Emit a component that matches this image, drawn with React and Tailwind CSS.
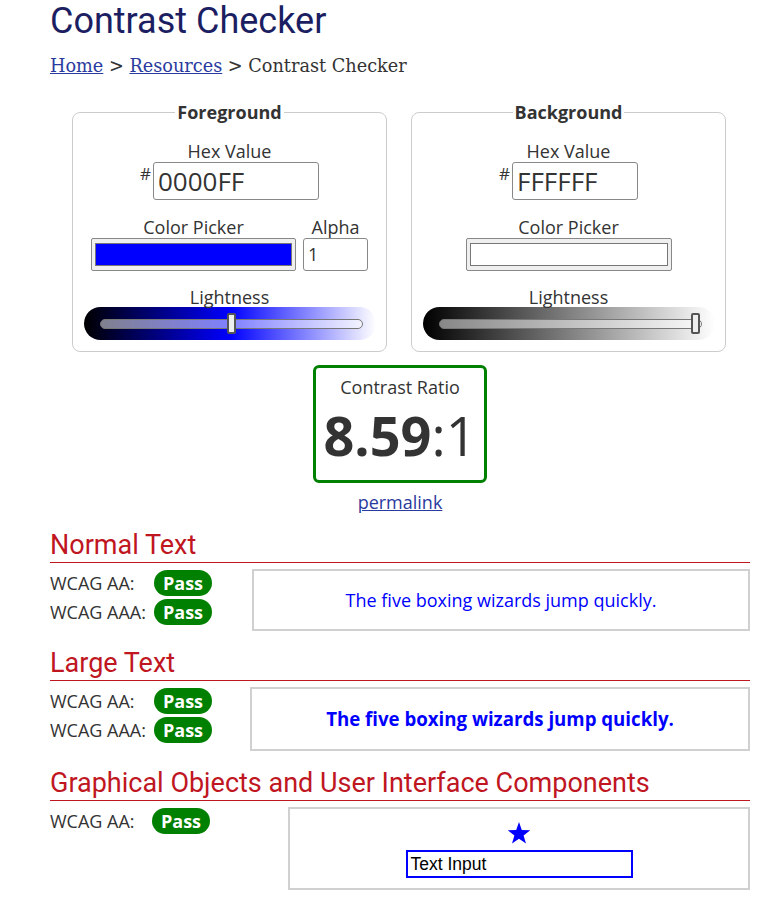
const RED = "text-[#c0161f]";

function Badge() {
  return (
    <span className="inline-flex h-[26px] items-center rounded-full bg-[#008000] px-[9px] text-[18px] font-bold leading-none text-white">
      Pass
    </span>
  );
}

function Slider({ gradient, pos }) {
  return (
    <div className="mx-auto mt-[-1px] flex h-[33px] w-[292px] items-center rounded-full pl-[16px] pr-[13px]" style={{ background: gradient }}>
      <div className="relative h-[10px] w-full rounded-full border border-[#777] bg-[rgba(255,255,255,0.5)]">
        <div
          className="absolute top-[-7px] h-[21px] w-[9px] rounded-[2px] border-2 border-[#555] bg-[#eee]"
          style={{ left: `calc(${pos}% - ${pos === 100 ? 10 : 4}px)` }}
        />
      </div>
    </div>
  );
}

function Swatch({ color, w }) {
  return (
    <div className={`flex h-[33px] ${w} rounded-[2px] border border-[#888] bg-[#efefef] px-[3px] py-[4px]`}>
      <div className="h-full w-full border border-[#777]" style={{ background: color }} />
    </div>
  );
}

function ColorFieldset({ legend, hex, hexW, color, gradient, pos, alpha }) {
  return (
    <fieldset className="w-[315px] rounded-[8px] border border-[#ccc] px-0 pb-[11px] pt-[16px]">
      <legend className="mx-auto px-[2px] text-[18px] font-bold leading-[24px] text-[#333]">{legend}</legend>
      <div className="text-center text-[18px] leading-[22px]">Hex Value</div>
      <div className="flex justify-center">
        <span className="mr-[2px] mt-[2px] text-[17px] leading-[20px]">#</span>
        <div className={`flex h-[38px] ${hexW} items-center rounded-[3px] border border-[#888] pl-[4px] text-[26px] text-[#333]`}>{hex}</div>
      </div>
      {alpha ? (
        <div className="mt-[16px] flex justify-center gap-[7px]">
          <div className="flex flex-col items-center">
            <div className="text-[18px] leading-[22px]">Color Picker</div>
            <Swatch color={color} w="w-[205px]" />
          </div>
          <div className="flex flex-col items-center">
            <div className="text-[18px] leading-[22px]">Alpha</div>
            <div className="flex h-[33px] w-[65px] items-center rounded-[3px] border border-[#888] pl-[4px] text-[18px]">1</div>
          </div>
        </div>
      ) : (
        <div className="mt-[16px] flex flex-col items-center">
          <div className="text-[18px] leading-[22px]">Color Picker</div>
          <Swatch color={color} w="w-[206px]" />
        </div>
      )}
      <div className="mt-[15px] text-center text-[18px] leading-[22px]">Lightness</div>
      <Slider gradient={gradient} pos={pos} />
    </fieldset>
  );
}

function Section({ title, leftW, labelW, rows, children, boxH }) {
  return (
    <div>
      <h2 className={`pb-[2px] font-['Roboto',sans-serif] text-[27px] leading-[30px] ${RED}`}>{title}</h2>
      <div className="h-[1px] bg-[#c0161f]" />
      <div className="mt-[6px] flex">
        <div className={`${leftW} shrink-0`}>
          {rows.map((r, i) => (
            <div key={r} className={`flex items-center ${i > 0 ? "mt-[3px]" : "mt-[1px]"}`}>
              <span className={`${labelW} text-[18px] leading-[26px] text-[#333]`}>{r}</span>
              <Badge />
            </div>
          ))}
        </div>
        <div className={`flex-1 border-2 border-[#d0d0d0] ${boxH}`}>{children}</div>
      </div>
    </div>
  );
}

export default function App() {
  return (
    <div className="min-h-[903px] w-[769px] bg-white font-['Open_Sans',sans-serif] text-[#333]">
      <div className="ml-[50px] w-[700px]">
        <h1 className="font-['Roboto',sans-serif] text-[36px] leading-[42px] text-[#1c1e62]">Contrast Checker</h1>
        <nav className="mt-[11px] font-['DejaVu_Serif',serif] text-[17.7px] leading-[26px] text-[#333]">
          <a className="text-[#2a3a9e] underline">Home</a> &gt; <a className="text-[#2a3a9e] underline">Resources</a> &gt; Contrast Checker
        </nav>
        <div className="mt-[21px] flex gap-[24px] pl-[22px]">
          <ColorFieldset
            legend="Foreground"
            hex="0000FF"
            hexW="w-[166px]"
            color="#0000ff"
            gradient="linear-gradient(to right, #000 0%, #0000ff 50%, #fff 100%)"
            pos={50}
            alpha
          />
          <ColorFieldset
            legend="Background"
            hex="FFFFFF"
            hexW="w-[126px]"
            color="#ffffff"
            gradient="linear-gradient(to right, #000 0%, #fff 100%)"
            pos={100}
          />
        </div>
        <div className="mt-[13px] flex flex-col items-center">
          <div className="flex h-[118px] w-[174px] flex-col items-center rounded-[6px] border-[3px] border-[#008000]">
            <div className="mt-[7px] text-[18px] leading-[24px] text-[#333]">Contrast Ratio</div>
            <div className="mt-[10px] text-[54px] leading-[53px] text-[#333]">
              <span className="font-bold">8.59</span>:1
            </div>
          </div>
          <a className="mt-[7px] text-[18px] leading-[24px] text-[#2a3a9e] underline">permalink</a>
        </div>
        <div className="mt-[16px]">
          <Section title="Normal Text" leftW="w-[202px]" labelW="w-[104px]" rows={["WCAG AA:", "WCAG AAA:"]} boxH="h-[62px]">
            <div className="flex h-full items-center justify-center text-[18px] text-[#0000ff]">The five boxing wizards jump quickly.</div>
          </Section>
        </div>
        <div className="mt-[17px]">
          <Section title="Large Text" leftW="w-[200px]" labelW="w-[104px]" rows={["WCAG AA:", "WCAG AAA:"]} boxH="h-[64px]">
            <div className="flex h-full items-center justify-center text-[18.67px] font-bold text-[#0000ff]">The five boxing wizards jump quickly.</div>
          </Section>
        </div>
        <div className="mt-[17px]">
          <Section title="Graphical Objects and User Interface Components" leftW="w-[238px]" labelW="w-[102px]" rows={["WCAG AA:"]} boxH="h-[83px]">
            <div className="flex h-full flex-col items-center pt-[12px]">
              <svg width="24" height="24" viewBox="0 0 24 24">
                <polygon points="12,1 14.8,9 23.3,9.2 16.6,14.4 19,22.6 12,17.8 5,22.6 7.4,14.4 0.7,9.2 9.2,9" fill="#0000ff" />
              </svg>
              <div className="mt-[5px] flex h-[28px] w-[227px] items-center border-2 border-[#0000ff] pl-[3px] font-['Liberation_Sans',sans-serif] text-[17.5px] text-black">
                Text Input
              </div>
            </div>
          </Section>
        </div>
      </div>
    </div>
  );
}
